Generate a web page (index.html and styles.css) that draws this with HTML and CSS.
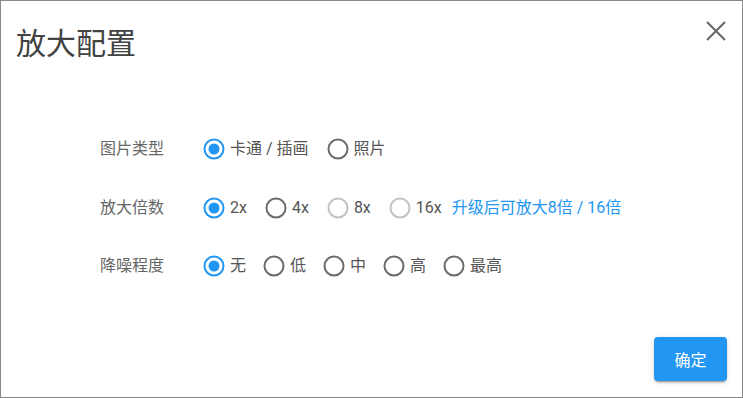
FILE: index.html
```html
<!DOCTYPE html>
<html lang="zh-CN">
<head>
<meta charset="utf-8">
<title>放大配置</title>
<link rel="stylesheet" href="styles.css">
</head>
<body>
<div class="dialog">
  <header class="dialog-header">
    <h1 class="dialog-title">放大配置</h1>
    <button class="close-btn" aria-label="关闭">
      <svg width="32" height="32" viewBox="0 0 32 32"><path d="M7 7 L25 25 M25 7 L7 25" stroke="#666" stroke-width="2" fill="none"/></svg>
    </button>
  </header>

  <div class="form">
    <div class="row">
      <div class="row-label">图片类型</div>
      <div class="options">
        <label class="opt"><svg class="radio on" width="22" height="22" viewBox="0 0 22 22"><circle cx="11" cy="11" r="9.5"/><circle class="dot" cx="11" cy="11" r="5.5"/></svg><span>卡通 / 插画</span></label>
        <label class="opt"><svg class="radio" width="22" height="22" viewBox="0 0 22 22"><circle cx="11" cy="11" r="9.5"/></svg><span>照片</span></label>
      </div>
    </div>
    <div class="row">
      <div class="row-label">放大倍数</div>
      <div class="options">
        <label class="opt"><svg class="radio on" width="22" height="22" viewBox="0 0 22 22"><circle cx="11" cy="11" r="9.5"/><circle class="dot" cx="11" cy="11" r="5.5"/></svg><span>2x</span></label>
        <label class="opt"><svg class="radio" width="22" height="22" viewBox="0 0 22 22"><circle cx="11" cy="11" r="9.5"/></svg><span>4x</span></label>
        <label class="opt"><svg class="radio disabled" width="22" height="22" viewBox="0 0 22 22"><circle cx="11" cy="11" r="9.5"/></svg><span>8x</span></label>
        <label class="opt"><svg class="radio disabled" width="22" height="22" viewBox="0 0 22 22"><circle cx="11" cy="11" r="9.5"/></svg><span>16x</span></label>
        <a class="upgrade" href="#">升级后可放大8倍 / 16倍</a>
      </div>
    </div>
    <div class="row">
      <div class="row-label">降噪程度</div>
      <div class="options tight">
        <label class="opt"><svg class="radio on" width="22" height="22" viewBox="0 0 22 22"><circle cx="11" cy="11" r="9.5"/><circle class="dot" cx="11" cy="11" r="5.5"/></svg><span>无</span></label>
        <label class="opt"><svg class="radio" width="22" height="22" viewBox="0 0 22 22"><circle cx="11" cy="11" r="9.5"/></svg><span>低</span></label>
        <label class="opt"><svg class="radio" width="22" height="22" viewBox="0 0 22 22"><circle cx="11" cy="11" r="9.5"/></svg><span>中</span></label>
        <label class="opt"><svg class="radio" width="22" height="22" viewBox="0 0 22 22"><circle cx="11" cy="11" r="9.5"/></svg><span>高</span></label>
        <label class="opt"><svg class="radio" width="22" height="22" viewBox="0 0 22 22"><circle cx="11" cy="11" r="9.5"/></svg><span>最高</span></label>
      </div>
    </div>
  </div>

  <footer class="dialog-footer">
    <button class="confirm-btn">确定</button>
  </footer>
</div>
</body>
</html>
```
FILE: styles.css
```css
html, body {
  margin: 0;
  padding: 0;
  background: #fff;
}
body {
  font-family: Roboto, "Noto Sans CJK SC", sans-serif;
  color: #616161;
}
.dialog {
  box-sizing: border-box;
  width: 743px;
  height: 398px;
  border: 1px solid #888;
  display: flex;
  flex-direction: column;
  background: #fff;
}
.dialog-header {
  display: flex;
  justify-content: space-between;
  align-items: flex-start;
}
.dialog-title {
  margin: 23px 0 0 15px;
  font-size: 30px;
  font-weight: 400;
  line-height: 40px;
  color: #424242;
}
.close-btn {
  margin: 14px 10px 0 0;
  padding: 0;
  width: 32px;
  height: 32px;
  border: 0;
  background: none;
  display: block;
}
.close-btn svg { display: block; }
.form {
  margin-top: 56px;
  padding-left: 99px;
}
.row {
  display: flex;
  align-items: center;
  height: 58.5px;
}
.row-label {
  width: 103px;
  font-size: 16px;
  line-height: 22px;
  color: #666;
}
.options {
  display: flex;
  align-items: center;
  gap: 18px;
}
.options.tight { gap: 17px; }
.opt {
  display: flex;
  align-items: center;
  font-size: 16px;
  line-height: 22px;
  color: #555;
}
.opt span { margin-left: 5px; }
.radio { display: block; }
.radio circle {
  fill: none;
  stroke: #6b6b6b;
  stroke-width: 2;
}
.radio.on circle { stroke: #2196F3; }
.radio.on .dot { fill: #2196F3; stroke: none; }
.radio.disabled circle { stroke: #c2c2c2; }
.upgrade {
  margin-left: -8px;
  font-size: 16px;
  line-height: 22px;
  color: #2196F3;
  text-decoration: none;
}
.dialog-footer {
  margin-top: auto;
  display: flex;
  justify-content: flex-end;
  padding: 0 15px 16px 0;
}
.confirm-btn {
  width: 73px;
  height: 44px;
  border: 0;
  border-radius: 4px;
  background: #2196F3;
  color: #fff;
  font-family: Roboto, "Noto Sans CJK SC", sans-serif;
  font-size: 16px;
  box-shadow: 0 3px 1px -2px rgba(0,0,0,.2), 0 2px 2px 0 rgba(0,0,0,.14), 0 1px 5px 0 rgba(0,0,0,.12);
}
```
